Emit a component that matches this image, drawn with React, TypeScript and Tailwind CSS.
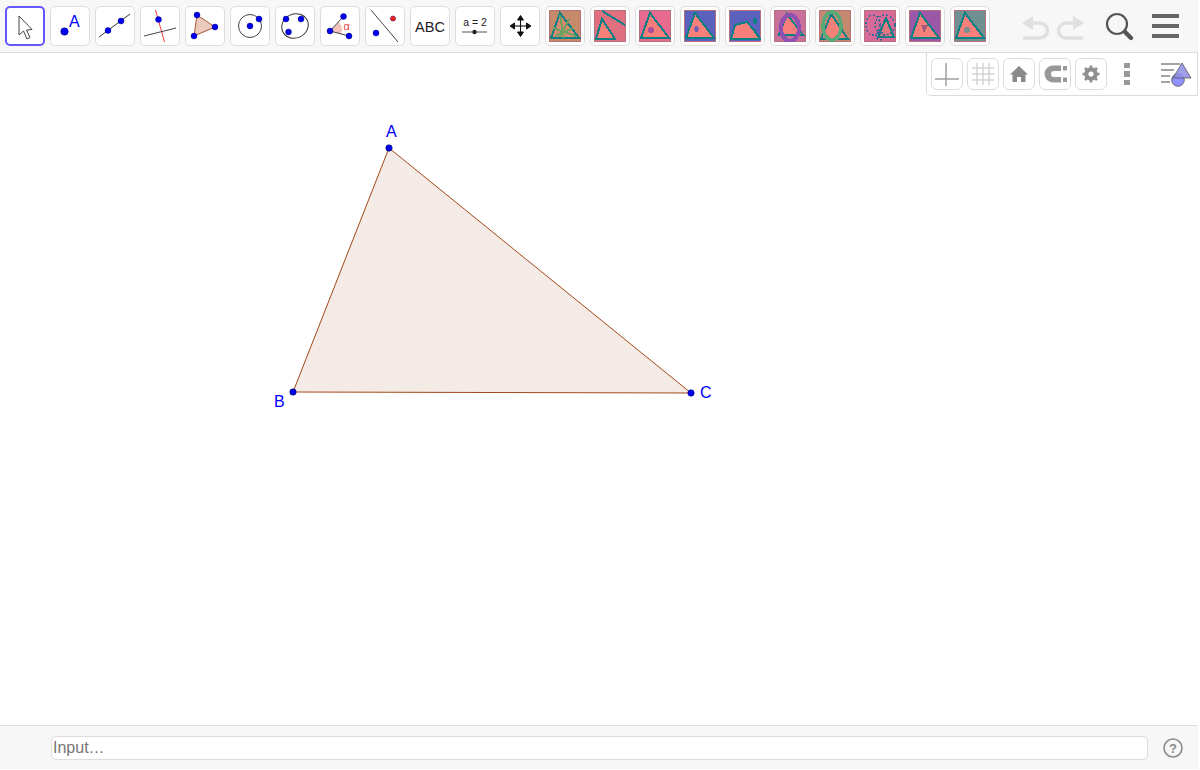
import React from "react";

const blue = "#0000ff";
const dark = "#00007d";

const Pt = ({ x, y, r = 3, c = "#0000f0" }: { x: number; y: number; r?: number; c?: string }) => (
  <circle cx={x} cy={y} r={r} fill={c} stroke="#00005a" strokeWidth={0.4} />
);

const toolIcons: React.ReactNode[] = [
  <path key="m" d="M14 10 L14 29 L18.5 25 L22 33 L25 31.5 L21.5 24 L27 23.5 Z" fill="#fff" stroke="#444" strokeWidth={1} />,
  <g key="p">
    <circle cx={14.5} cy={25.5} r={3.8} fill="#0000f0" stroke="#00005a" strokeWidth={0.4} />
    <text x={19} y={21} fontSize={16} fill={blue} fontFamily="Liberation Sans, sans-serif">A</text>
  </g>,
  <g key="l">
    <line x1={4} y1={31} x2={35} y2={8} stroke="#333" strokeWidth={1} />
    <Pt x={13} y={24.5} />
    <Pt x={26} y={15} />
  </g>,
  <g key="pp">
    <line x1={15.5} y1={4} x2={24.5} y2={36} stroke="#f03c3c" strokeWidth={1} />
    <line x1={4} y1={30} x2={36} y2={22} stroke="#444" strokeWidth={1} />
    <Pt x={18.5} y={13.5} />
  </g>,
  <g key="t">
    <polygon points="12,9 30,21 9,30" fill="#eccbbd" stroke="#a8583a" strokeWidth={1} />
    <Pt x={12} y={9} />
    <Pt x={30} y={21} />
    <Pt x={9} y={30} />
  </g>,
  <g key="c">
    <circle cx={20} cy={20} r={11.5} fill="none" stroke="#444" strokeWidth={1} />
    <Pt x={20} y={20} />
    <Pt x={29} y={13} />
  </g>,
  <g key="co">
    <ellipse cx={20} cy={20} rx={13.5} ry={12} transform="rotate(-25 20 20)" fill="none" stroke="#333" strokeWidth={1} />
    <Pt x={11} y={13} />
    <Pt x={26} y={13} />
    <Pt x={13.5} y={26} />
  </g>,
  <g key="a">
    <path d="M10 25 L18.5 16 A11 11 0 0 1 21 28 Z" fill="#f0c4ba" />
    <line x1={10} y1={25} x2={23.5} y2={10.5} stroke="#444" strokeWidth={1} />
    <line x1={10} y1={25} x2={29} y2={30} stroke="#444" strokeWidth={1} />
    <Pt x={10} y={25} />
    <Pt x={23.5} y={10.5} />
    <Pt x={29} y={30} />
    <text x={23.5} y={24} fontSize={11} fill="#e84040" fontFamily="Liberation Sans, sans-serif">α</text>
  </g>,
  <g key="r">
    <line x1={6} y1={4} x2={33} y2={36} stroke="#444" strokeWidth={1} />
    <Pt x={11} y={27} />
    <Pt x={28} y={12.5} r={2.6} c="#f02020" />
  </g>,
  <text key="abc" x={20} y={26} textAnchor="middle" fontSize={14.5} fill="#222" fontFamily="Liberation Sans, sans-serif">ABC</text>,
  <g key="s">
    <text x={20} y={20} textAnchor="middle" fontSize={10.5} fill="#222" fontFamily="Liberation Sans, sans-serif">a = 2</text>
    <line x1={7} y1={26} x2={32} y2={26} stroke="#555" strokeWidth={1} />
    <circle cx={19.5} cy={26} r={2.2} fill="#222" />
  </g>,
  <g key="mv" fill="#111" stroke="#111">
    <line x1={13} y1={20} x2={28} y2={20} strokeWidth={1.1} />
    <line x1={20.5} y1={13} x2={20.5} y2={27} strokeWidth={1.1} />
    <polygon points="20.5,9.5 17.5,14 23.5,14" />
    <polygon points="20.5,30.5 17.5,26 23.5,26" />
    <polygon points="10,20 14.5,17 14.5,23" />
    <polygon points="31,20 26.5,17 26.5,23" />
  </g>,
];

type Thumb = { bg: string; fill: string; extra?: React.ReactNode; under?: React.ReactNode; tri?: string };

const defaultTri = "11,3 2,28 30,28";

const thumbs: Thumb[] = [
  {
    bg: "#c48a6a",
    fill: "#d98a70",
    extra: <path d="M11 5 L15 28 M20 9 L11 27 M4 18 L27 26 M6 26 L24 18" stroke="#6fa060" strokeWidth={2} />,
  },
  {
    bg: "#e0707f",
    fill: "#f98078",
    tri: "8,9 2,29 21,29",
    extra: <line x1={8} y1={1} x2={31} y2={15} stroke="#0a7f84" strokeWidth={2} />,
  },
  {
    bg: "#e96a8f",
    fill: "#fb7d78",
    extra: <circle cx={12} cy={20} r={3} fill="#a8509a" />,
  },
  {
    bg: "#5a62bd",
    fill: "#f97f7a",
    extra: <ellipse cx={12.5} cy={19} rx={2.2} ry={3} fill="#7060b0" />,
  },
  {
    bg: "#5a62bd",
    fill: "#f97f7a",
    tri: "6,15 18,12 25,20 31,29 2,29",
    extra: <ellipse cx={26} cy={11} rx={2.2} ry={3} fill="#0a7f84" />,
  },
  {
    bg: "#c8709a",
    fill: "#f97f7a",
    tri: "13,4 5,25 29,25",
    extra: <ellipse cx={16} cy={18} rx={9} ry={13} fill="none" stroke="#9050b0" strokeWidth={4} />,
  },
  {
    bg: "#c48a70",
    fill: "#f98078",
    tri: "12,4 2,29 29,29",
    extra: <ellipse cx={13} cy={16} rx={9} ry={14} fill="none" stroke="#58a878" strokeWidth={3.5} />,
  },
  {
    bg: "#d86a98",
    fill: "#e07880",
    tri: "22,8 14,27 30,27",
    extra: (
      <g fill="none" stroke="#3a6a9a" strokeWidth={1.4} strokeDasharray="2 2">
        <ellipse cx={9} cy={15} rx={7} ry={10} />
        <circle cx={21} cy={15} r={10} />
        <circle cx={16} cy={26} r={4} />
      </g>
    ),
  },
  {
    bg: "#9c58a8",
    fill: "#f97f7a",
    extra: <polygon points="12,15 19,15 15,23" fill="#a45a7a" />,
  },
  {
    bg: "#6f9090",
    fill: "#f97f7a",
    extra: <ellipse cx={13} cy={20} rx={3} ry={3.5} fill="#7f8f8f" />,
  },
];

const ThumbIcon = ({ t }: { t: Thumb }) => (
  <svg width={32} height={32} viewBox="0 0 32 32" shapeRendering="crispEdges">
    <rect width={32} height={32} fill={t.bg} />
    <rect x={0.5} y={0.5} width={31} height={31} fill="none" stroke="#b5707a" />
    <polygon points={t.tri ?? defaultTri} fill={t.fill} stroke="#0a7f84" strokeWidth={2} />
    {t.extra}
  </svg>
);

const Tool = ({ children, active }: { children: React.ReactNode; active?: boolean }) => (
  <div
    className={
      active
        ? "flex h-[40px] w-[40px] items-center justify-center rounded-[5px] border-2 border-[#6557ff] bg-white"
        : "flex h-[40px] w-[40px] items-center justify-center rounded-[5px] border border-[#dedede] bg-white"
    }
  >
    {children}
  </div>
);

const StyleBtn = ({ children }: { children: React.ReactNode }) => (
  <div className="flex h-[32px] w-[32px] items-center justify-center rounded-[6px] border border-[#dcdcdc] bg-white">
    <svg width={30} height={30} viewBox="0 0 30 30">
      {children}
    </svg>
  </div>
);

export default function App() {
  return (
    <div className="relative flex h-[770px] w-[1200px] flex-col overflow-hidden bg-white font-['Liberation_Sans',sans-serif]">
      {/* toolbar */}
      <div className="flex h-[53px] w-[1198px] shrink-0 items-center gap-[5px] border-b border-[#dcdcdc] bg-[#f7f7f7] pl-[5px]">
        {toolIcons.map((icon, i) => (
          <Tool key={i} active={i === 0}>
            <svg width={40} height={40} viewBox="0 0 40 40" className="shrink-0">
              {icon}
            </svg>
          </Tool>
        ))}
        {thumbs.map((t, i) => (
          <Tool key={i}>
            <ThumbIcon t={t} />
          </Tool>
        ))}
        <div className="ml-[25px] flex items-center gap-[6px]">
          <svg width={30} height={28} viewBox="0 0 30 28" fill="none">
            <path d="M8 11 H20 A7.5 7.5 0 0 1 20 26 H3" stroke="#e0e0e0" strokeWidth={3.5} />
            <polygon points="2,11 13,4 13,18" fill="#e0e0e0" />
          </svg>
          <svg width={30} height={28} viewBox="0 0 30 28" fill="none">
            <path d="M22 11 H10 A7.5 7.5 0 0 0 10 26 H27" stroke="#e0e0e0" strokeWidth={3.5} />
            <polygon points="28,11 17,4 17,18" fill="#e0e0e0" />
          </svg>
        </div>
        <svg width={32} height={32} viewBox="0 0 32 32" fill="none" className="ml-[12px]">
          <circle cx={14} cy={14} r={10} stroke="#555" strokeWidth={2.2} />
          <line x1={22} y1={22} x2={28} y2={28} stroke="#555" strokeWidth={4.4} strokeLinecap="round" />
        </svg>
        <div className="ml-[12px] flex w-[27px] flex-col gap-[6px]">
          <div className="h-[4px] bg-[#666]" />
          <div className="h-[4px] bg-[#666]" />
          <div className="h-[4px] bg-[#666]" />
        </div>
      </div>

      {/* graphics view */}
      <div className="relative flex-1">
        <svg width={1200} height={672} viewBox="0 53 1200 672" className="block">
          <polygon points="389,148 293,392 691,393" fill="#f4ebe6" stroke="#993300" strokeWidth={0.9} />
          <circle cx={389} cy={148} r={3.2} fill="#0000f0" stroke="#00005a" strokeWidth={0.6} />
          <circle cx={293} cy={392} r={3.2} fill="#0000f0" stroke="#00005a" strokeWidth={0.6} />
          <circle cx={691} cy={393} r={3.2} fill="#0000f0" stroke={dark} strokeWidth={0.6} />
          <g fontSize={16} fill={blue} fontFamily="Liberation Sans, sans-serif">
            <text x={386} y={137}>A</text>
            <text x={274} y={406.5}>B</text>
            <text x={700} y={397.5}>C</text>
          </g>
        </svg>

        {/* style bar */}
        <div className="absolute right-[2px] top-0 flex h-[43px] w-[272px] items-center gap-[4px] rounded-bl-[5px] border-b border-l border-r border-[#dcdcdc] bg-white pl-[4px]">
          <StyleBtn>
            <line x1={3} y1={20} x2={27} y2={20} stroke="#999" strokeWidth={1.4} />
            <line x1={14} y1={4} x2={14} y2={27} stroke="#999" strokeWidth={1.4} />
          </StyleBtn>
          <StyleBtn>
            <g stroke="#d2d2d2" strokeWidth={1.4}>
              <line x1={4} y1={9} x2={26} y2={9} />
              <line x1={4} y1={15} x2={26} y2={15} />
              <line x1={4} y1={21} x2={26} y2={21} />
              <line x1={9} y1={4} x2={9} y2={26} />
              <line x1={15} y1={4} x2={15} y2={26} />
              <line x1={21} y1={4} x2={21} y2={26} />
            </g>
          </StyleBtn>
          <StyleBtn>
            <path d="M15 7 L24 15.5 H21.5 V23 H17 V18 H13 V23 H8.5 V15.5 H6 Z" fill="#8a8a8a" />
          </StyleBtn>
          <StyleBtn>
            <path
              d="M21 6.5 H13 A8.5 8.5 0 0 0 13 23.5 H21 V18 H14 A3 3 0 0 1 14 12 H21 Z"
              fill="#999"
            />
            <rect x={23} y={7} width={4} height={4.5} fill="#999" />
            <rect x={23} y={18.5} width={4} height={4.5} fill="#999" />
          </StyleBtn>
          <StyleBtn>
            <circle cx={15} cy={15} r={5} fill="none" stroke="#8f8f8f" strokeWidth={3.4} />
            <g stroke="#8f8f8f" strokeWidth={2.6}>
              <line x1={15} y1={6.5} x2={15} y2={23.5} />
              <line x1={6.5} y1={15} x2={23.5} y2={15} />
              <line x1={9} y1={9} x2={21} y2={21} />
              <line x1={21} y1={9} x2={9} y2={21} />
            </g>
            <circle cx={15} cy={15} r={2.6} fill="#fff" />
          </StyleBtn>
          <div className="ml-[13px] flex w-[6px] flex-col gap-[3px]">
            <div className="h-[5.5px] bg-[#999]" />
            <div className="h-[5.5px] bg-[#999]" />
            <div className="h-[5.5px] bg-[#999]" />
          </div>
          <svg width={34} height={30} viewBox="0 0 34 30" className="ml-[26px]">
            <g stroke="#999" strokeWidth={1.8}>
              <line x1={1} y1={5} x2={20} y2={5} />
              <line x1={1} y1={11} x2={14} y2={11} />
              <line x1={1} y1={17} x2={10} y2={17} />
              <line x1={1} y1={23} x2={10} y2={23} />
            </g>
            <circle cx={18} cy={21} r={6.3} fill="#9090ff" stroke="#555" strokeWidth={0.8} />
            <polygon points="22,4 31,19 13,19" fill="#8e8ee8" fillOpacity={0.85} stroke="#555" strokeWidth={0.8} />
          </svg>
        </div>
      </div>

      {/* input bar */}
      <div className="flex h-[44px] w-[1198px] shrink-0 items-center border-t border-[#dcdcdc] bg-[#f7f7f7] pl-[51px]">
        <div className="flex h-[24px] w-[1097px] items-center rounded-[5px] border border-[#dcdcdc] bg-white pl-[1px] text-[16px] text-[#757575]">
          Input…
        </div>
        <svg width={22} height={22} viewBox="0 0 22 22" className="ml-[14px]">
          <circle cx={11} cy={11} r={9} fill="none" stroke="#8a8a8a" strokeWidth={1.6} />
          <text x={11} y={15.5} textAnchor="middle" fontSize={13} fontWeight={700} fill="#8a8a8a" fontFamily="Liberation Sans, sans-serif">?</text>
        </svg>
      </div>
      <div className="h-px shrink-0 bg-white" />
    </div>
  );
}
